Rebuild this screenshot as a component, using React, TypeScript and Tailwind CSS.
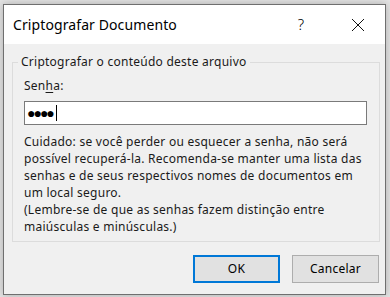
export default function App() {
    return (
        <div
            className="h-[297px] w-[390px] overflow-hidden bg-[#e4e4e4] pl-[3px] pt-[4px]"
            style={{ fontFamily: '"Noto Sans", "Open Sans", sans-serif' }}
        >
            <div className="flex h-[291px] w-[383px] flex-col border border-[#6f6f6f] bg-[#f0f0f0] shadow-[0_0_8px_rgba(0,0,0,0.25)]">
                <div className="flex h-[39px] shrink-0 items-center bg-white pl-[9px] text-[14px] text-black">
                    <span className="flex-1 tracking-[0.1px]">Criptografar Documento</span>
                    <span className="w-[20px] text-center text-[15px] font-light">?</span>
                    <span className="ml-[40px] mr-[20px] flex h-[14px] w-[14px] items-center justify-center">
                        <svg width="14" height="14" viewBox="0 0 14 14" fill="none" stroke="#111" strokeWidth="1">
                            <path d="M1 1 L13 13 M13 1 L1 13" />
                        </svg>
                    </span>
                </div>

                <div className="flex flex-1 flex-col pl-[8px] pr-[5px] text-[12px] tracking-[0.25px] text-[#1a1a1a]">
                    <fieldset className="mt-[10px] border border-[#dcdcdc] px-0 pb-[6px] pt-0">
                        <legend className="ml-[5px] px-[3px] leading-[16px]">Criptografar o conteúdo deste arquivo</legend>
                        <div className="pl-[11px] pr-[12px]">
                            <div className="mt-[8px] leading-[16px]">
                                Sen<u className="underline-offset-2">h</u>a:
                            </div>
                            <div className="mt-[7px] flex h-[24px] items-center border border-[#7a7a7a] bg-white pl-[2px]">
                                <span className="text-[14px] leading-none tracking-[-2px] text-black">●●●●</span>
                                <span className="ml-[3px] h-[16px] w-[1px] bg-black" />
                            </div>
                            <p className="mt-[8px] leading-[17px]">
                                Cuidado: se você perder ou esquecer a senha, não será possível recuperá-la. Recomenda-se
                                manter uma lista das senhas e de seus respectivos nomes de documentos em um local seguro.
                                <br />
                                (Lembre-se de que as senhas fazem distinção entre maiúsculas e minúsculas.)
                            </p>
                        </div>
                    </fieldset>

                    <div className="mt-[13px] flex justify-end gap-[12px] pr-[1px]">
                        <button className="h-[28px] w-[87px] border-2 border-[#0078d7] bg-[#e1e1e1] text-[12px] text-black">
                            OK
                        </button>
                        <button className="h-[28px] w-[87px] border border-[#adadad] bg-[#e1e1e1] text-[12px] text-black">
                            Cancelar
                        </button>
                    </div>
                </div>
            </div>
        </div>
    );
}
